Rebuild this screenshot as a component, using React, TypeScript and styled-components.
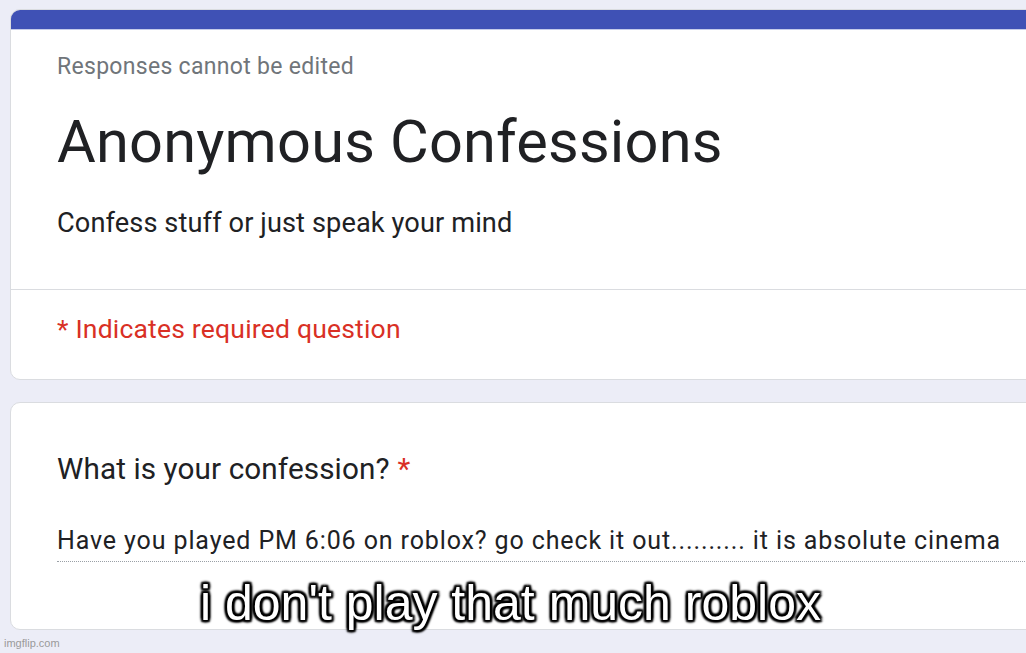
import React from "react";
import styled, { createGlobalStyle } from "styled-components";

const Global = createGlobalStyle`
  html, body { margin: 0; padding: 0; }
  body {
    background: #ecedf7;
    font-family: Roboto, "Liberation Sans", sans-serif;
    width: 1026px;
    height: 653px;
    overflow: hidden;
  }
`;

const Page = styled.div`
  position: relative;
  width: 1026px;
  height: 653px;
  overflow: hidden;
  padding: 9px 0 0 10px;
  box-sizing: border-box;
  display: flex;
  flex-direction: column;
  gap: 22px;
`;

const Card = styled.div<{ $h: number }>`
  width: 1100px;
  height: ${(p) => p.$h}px;
  flex-shrink: 0;
  background: #fff;
  border: 1px solid #dadce0;
  border-radius: 10px;
  box-sizing: border-box;
  overflow: hidden;
`;

const TopBar = styled.div`
  height: 19px;
  background: #3f51b5;
  border-bottom: 1px solid #c5cbe9;
`;

const Section = styled.div<{ $pt: number; $h: number }>`
  padding: ${(p) => p.$pt}px 0 0 46px;
  height: ${(p) => p.$h}px;
  box-sizing: border-box;
`;

const Divider = styled.div`
  height: 1px;
  background: #dadce0;
`;

const Note = styled.div`
  font-size: 23px;
  line-height: 26px;
  letter-spacing: 0.3px;
  color: #70757a;
`;

const Title = styled.h1`
  margin: 27px 0 0;
  font-weight: 400;
  font-size: 59.5px;
  line-height: 70px;
  letter-spacing: 0.2px;
  color: #202124;
`;

const Description = styled.div`
  margin-top: 30px;
  font-size: 27.2px;
  line-height: 32px;
  letter-spacing: 0.1px;
  color: #202124;
`;

const Required = styled.div`
  font-size: 26.5px;
  line-height: 32px;
  letter-spacing: 0.2px;
  color: #d93025;
`;

const Question = styled.div`
  font-size: 29.7px;
  line-height: 34px;
  letter-spacing: 0.1px;
  color: #202124;
`;

const Star = styled.span`
  color: #d93025;
  margin-left: 8px;
`;

const Answer = styled.div`
  margin-top: 39px;
  width: 1000px;
  font-size: 25px;
  line-height: 32px;
  letter-spacing: 0.88px;
  color: #202124;
  padding-bottom: 4px;
  border-bottom: 1px dotted #9aa0a6;
  white-space: nowrap;
`;

const Caption = styled.div`
  position: absolute;
  left: 200px;
  top: 578px;
  font-family: "Liberation Sans", Arial, sans-serif;
  font-size: 50px;
  line-height: 50px;
  color: #fff;
  white-space: nowrap;
  text-shadow:
    -2px -2px 2px #000, 2px -2px 2px #000, -2px 2px 2px #000, 2px 2px 2px #000,
    0 0 3px #000, 0 2px 3px #000, 0 -2px 3px #000, 2px 0 3px #000, -2px 0 3px #000;
`;

const Watermark = styled.div`
  position: absolute;
  left: 4px;
  bottom: 4px;
  font-family: "Liberation Sans", Arial, sans-serif;
  font-size: 11px;
  color: #9a9a9a;
`;

export default function App() {
  return (
    <>
      <Global />
      <Page>
        <Card $h={371}>
          <TopBar />
          <Section $pt={24} $h={259}>
            <Note>Responses cannot be edited</Note>
            <Title>Anonymous Confessions</Title>
            <Description>Confess stuff or just speak your mind</Description>
          </Section>
          <Divider />
          <Section $pt={23} $h={89}>
            <Required>* Indicates required question</Required>
          </Section>
        </Card>
        <Card $h={228}>
          <Section $pt={49} $h={226}>
            <Question>
              What is your confession?<Star>*</Star>
            </Question>
            <Answer>
              Have you played PM 6:06 on roblox? go check it out.......... it is absolute cinema
            </Answer>
          </Section>
        </Card>
        <Caption>i don't play that much roblox</Caption>
        <Watermark>imgflip.com</Watermark>
      </Page>
    </>
  );
}
